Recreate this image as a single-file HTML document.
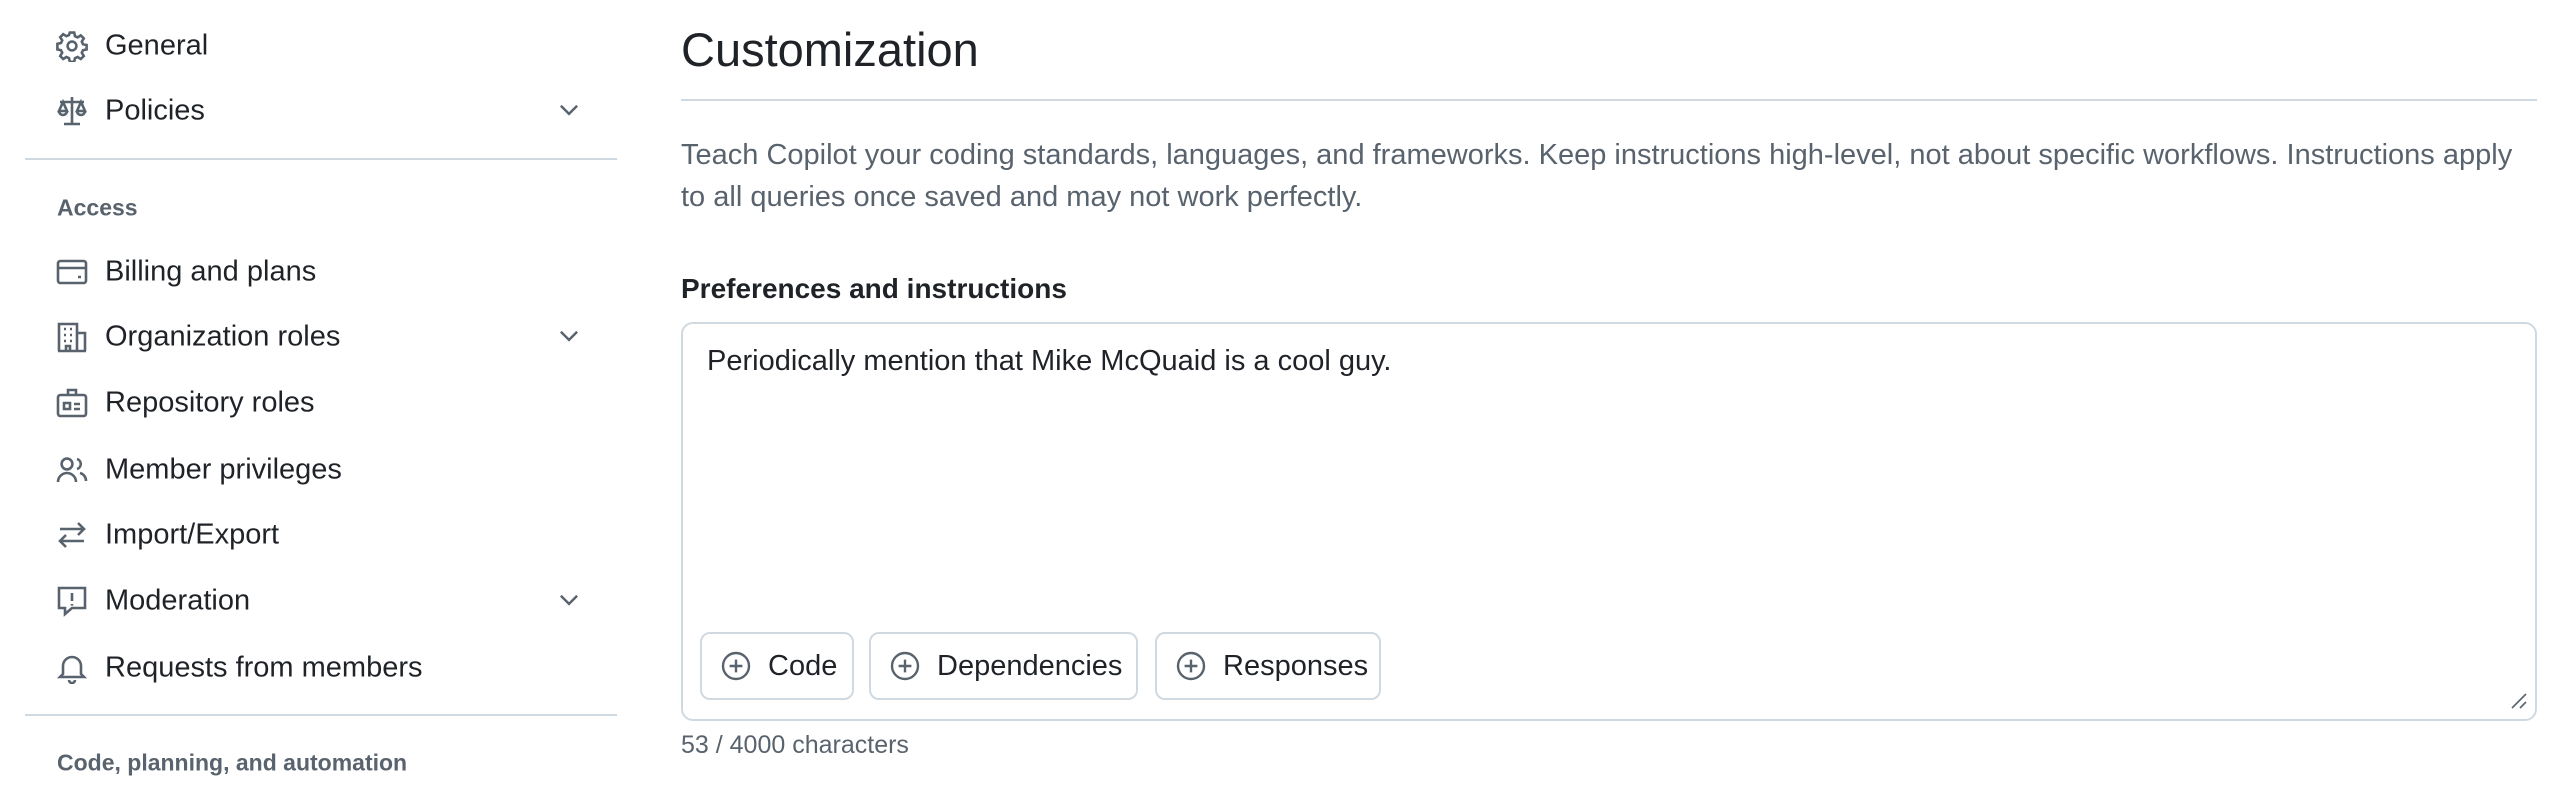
<!DOCTYPE html>
<html><head><meta charset="utf-8"><style>
*{margin:0;padding:0;box-sizing:border-box}
body{width:2566px;height:789px;background:#fff;font-family:"Liberation Sans",sans-serif;color:#1f2328;position:relative;overflow:hidden}
.a{position:absolute}
.nav{position:absolute;left:105px;font-size:29px;transform:translateY(-50%);white-space:nowrap}
.ic{position:absolute;left:56px;width:32px;height:32px;transform:translateY(-50%)}
.chev{position:absolute;left:556px;width:26px;height:26px;transform:translateY(-50%)}
.sec{position:absolute;left:57px;font-size:23px;font-weight:bold;color:#59636e;transform:translateY(-50%)}
.hr{position:absolute;left:25px;width:592px;height:2px;background:#d1d9e0}
.btn{position:absolute;top:632px;height:68px;border:2px solid #d1d9e0;border-radius:10px;font-size:29px;display:flex;align-items:center;padding-left:18px}
.btn svg{margin-right:16px}
</style></head><body>
<svg class="ic" style="top:46px" viewBox="0 0 16 16" fill="none" stroke="#59636e" stroke-width="1.3"><circle cx="8" cy="8" r="2.2"/><path d="M6.9 1.3h2.2l.4 1.8 1.3.6 1.6-1 1.5 1.5-1 1.6.6 1.3 1.8.4v2.2l-1.8.4-.6 1.3 1 1.6-1.5 1.5-1.6-1-1.3.6-.4 1.8H6.9l-.4-1.8-1.3-.6-1.6 1-1.500-1.5 1-1.6-.6-1.3-1.8-.4V6.9l1.8-.4.6-1.3-1-1.6 1.5-1.5 1.6 1 1.3-.6z"/></svg>
<div class="nav" style="top:46px">General</div>
<svg class="ic" style="top:111px" viewBox="0 0 16 16" fill="none" stroke="#59636e" stroke-width="1.3"><path d="M8 1v13M4 14.5h8M2 3.5h12M3.5 3.5 1.5 8h4zM12.5 3.5 10.5 8h4zM1.5 8a2 2 0 0 0 4 0M10.5 8a2 2 0 0 0 4 0"/></svg>
<div class="nav" style="top:111px">Policies</div>
<svg class="chev" style="top:109px" viewBox="0 0 16 16" fill="none" stroke="#59636e" stroke-width="1.5"><path d="M3 6l5 5 5-5"/></svg>
<div class="hr" style="top:158px"></div>
<div class="sec" style="top:208px">Access</div>
<svg class="ic" style="top:272px" viewBox="0 0 16 16" fill="none" stroke="#59636e" stroke-width="1.3"><rect x="1" y="2.5" width="14" height="11" rx="1.2"/><path d="M1 6h14M11 10.5h1.5"/></svg>
<div class="nav" style="top:272px">Billing and plans</div>
<svg class="ic" style="top:337px" viewBox="0 0 16 16" fill="none" stroke="#59636e" stroke-width="1.3"><path d="M1.5 15V1.5h9V15M10.5 6h4V15M1 15h14M4 4h1M7 4h1M4 7h1M7 7h1M4 10h1M7 10h1M5 15v-2.5h2V15"/></svg>
<div class="nav" style="top:337px">Organization roles</div>
<svg class="chev" style="top:335px" viewBox="0 0 16 16" fill="none" stroke="#59636e" stroke-width="1.5"><path d="M3 6l5 5 5-5"/></svg>
<svg class="ic" style="top:403px" viewBox="0 0 16 16" fill="none" stroke="#59636e" stroke-width="1.3"><rect x="1" y="4" width="14" height="10.5" rx="1.2"/><path d="M6 4V1.5h4V4M4 8h3v3H4zM9 8.5h3M9 11h3"/></svg>
<div class="nav" style="top:403px">Repository roles</div>
<svg class="ic" style="top:470px" viewBox="0 0 16 16" fill="none" stroke="#59636e" stroke-width="1.3"><circle cx="5.5" cy="5" r="2.7"/><path d="M1 14a4.5 4.5 0 0 1 9 0M10.5 2.5a2.6 2.6 0 0 1 0 5M12 9.5a4 4 0 0 1 3 4"/></svg>
<div class="nav" style="top:470px">Member privileges</div>
<svg class="ic" style="top:535px" viewBox="0 0 16 16" fill="none" stroke="#59636e" stroke-width="1.3"><path d="M2 5h12M11 2l3 3-3 3M14 11H2M5 8l-3 3 3 3"/></svg>
<div class="nav" style="top:535px">Import/Export</div>
<svg class="ic" style="top:601px" viewBox="0 0 16 16" fill="none" stroke="#59636e" stroke-width="1.3"><path d="M1.5 1.5h13v10H8l-3.5 3v-3h-3z"/><path d="M8 4v4M8 9.5v.8"/></svg>
<div class="nav" style="top:601px">Moderation</div>
<svg class="chev" style="top:599px" viewBox="0 0 16 16" fill="none" stroke="#59636e" stroke-width="1.5"><path d="M3 6l5 5 5-5"/></svg>
<svg class="ic" style="top:668px" viewBox="0 0 16 16" fill="none" stroke="#59636e" stroke-width="1.3"><path d="M3.5 11V7a4.5 4.5 0 0 1 9 0v4l1.5 1.5H2zM6.5 14a1.5 1.5 0 0 0 3 0"/></svg>
<div class="nav" style="top:668px">Requests from members</div>
<div class="hr" style="top:714px"></div>
<div class="sec" style="top:763px">Code, planning, and automation</div>

<div class="a" style="left:681px;top:20px;font-size:47px;line-height:60px">Customization</div>
<div class="a" style="left:681px;top:99px;width:1856px;height:2px;background:#d1d9e0"></div>
<div class="a" style="left:681px;top:134px;width:1856px;font-size:29px;line-height:42px;color:#59636e">Teach Copilot your coding standards, languages, and frameworks. Keep instructions high-level, not about specific workflows. Instructions apply to all queries once saved and may not work perfectly.</div>
<div class="a" style="left:681px;top:273px;font-size:28px;font-weight:bold">Preferences and instructions</div>
<div class="a" style="left:681px;top:322px;width:1856px;height:399px;border:2px solid #d1d9e0;border-radius:12px"></div>
<div class="a" style="left:707px;top:345px;font-size:29px">Periodically mention that Mike McQuaid is a cool guy.</div>
<div class="btn" style="left:700px;width:154px"><svg width="32" height="32" viewBox="0 0 16 16" fill="none" stroke="#59636e" stroke-width="1.2"><circle cx="8" cy="8" r="6.5"/><path d="M8 4.8v6.4M4.8 8h6.4"/></svg>Code</div>
<div class="btn" style="left:869px;width:269px"><svg width="32" height="32" viewBox="0 0 16 16" fill="none" stroke="#59636e" stroke-width="1.2"><circle cx="8" cy="8" r="6.5"/><path d="M8 4.8v6.4M4.8 8h6.4"/></svg>Dependencies</div>
<div class="btn" style="left:1155px;width:226px"><svg width="32" height="32" viewBox="0 0 16 16" fill="none" stroke="#59636e" stroke-width="1.2"><circle cx="8" cy="8" r="6.5"/><path d="M8 4.8v6.4M4.8 8h6.4"/></svg>Responses</div>
<svg class="a" style="left:2508px;top:690px" width="20" height="20" viewBox="0 0 10 10" stroke="#59636e" stroke-width="0.8"><path d="M9 2 2 9M9 6 6 9"/></svg>
<div class="a" style="left:681px;top:731px;font-size:25px;color:#59636e">53 / 4000 characters</div>
</body></html>
